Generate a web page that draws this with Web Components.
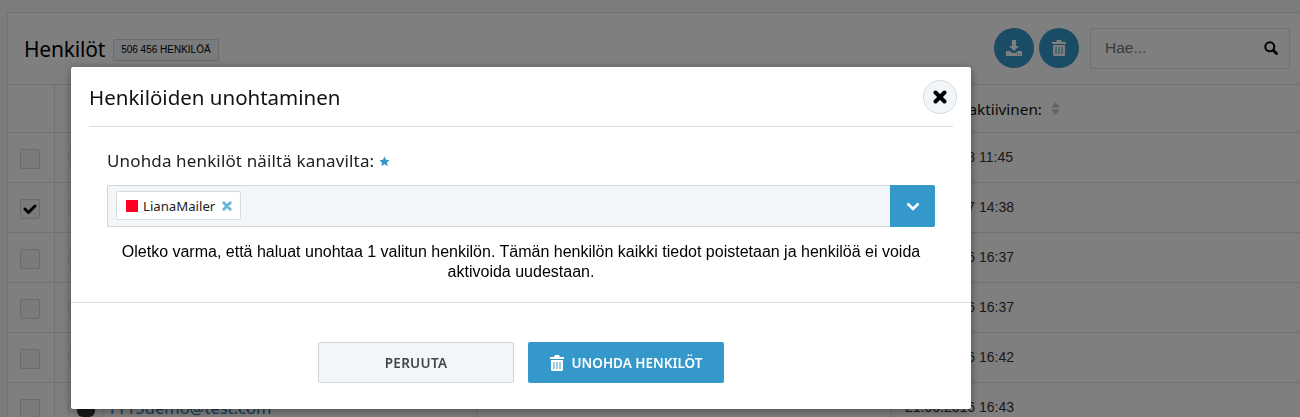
<!DOCTYPE html>
<html lang="fi">
<head>
<meta charset="utf-8">
<title>Henkilöt</title>
<style>
  html, body { margin: 0; height: 417px; overflow: hidden; }
  body { background: #f7f8fa; font-family: "Liberation Sans", Arial, sans-serif; color: #000; }
</style>
</head>
<body>
<people-page></people-page>
<forget-dialog></forget-dialog>

<script>
const SANS = `"Noto Sans", "Open Sans", sans-serif`;

const ICONS = {
	trash: '<svg viewBox="0 0 14 16" width="14" height="16"><path fill="currentColor" fill-rule="evenodd" d="M5 0h4l1 2h4v2H0V2h4zM1 5h12v9.500a1.500 1.500 0 0 1-1.500 1.500h-9A1.500 1.500 0 0 1 1 14.500zM3.500 7v7h1V7zm3 0v7h1V7zm3 0v7h1V7z"/></svg>',
	download: '<svg viewBox="0 0 16 16" width="16" height="16"><path fill="currentColor" fill-rule="evenodd" d="M6 0h4v6h3L8 11 3 6h3zM0 11h4l2 2h4l2-2h4v5H0zm11 2.800v1h1v-1zm2.200 0v1h1v-1z"/></svg>',
	search: '<svg viewBox="0 0 14 14" width="14" height="14"><path fill="none" stroke="currentColor" stroke-width="2" d="M5.800 1.300a4.500 4.500 0 1 0 0 9 4.500 4.500 0 0 0 0-9z"/><path stroke="currentColor" stroke-width="2.800" stroke-linecap="round" d="M9.500 9.500l3 3"/></svg>',
	close: '<svg viewBox="0 0 14 14" width="14" height="14"><path stroke="currentColor" stroke-width="4" stroke-linecap="round" d="M2.500 2.500l9 9M11.500 2.500l-9 9"/></svg>',
	check: '<svg viewBox="0 0 14 12" width="14" height="12"><path fill="none" stroke="currentColor" stroke-width="3" stroke-linecap="round" stroke-linejoin="round" d="M2 6l3.500 3.500L12 3"/></svg>',
	chevron: '<svg viewBox="0 0 14 9" width="14" height="9"><path fill="none" stroke="currentColor" stroke-width="2.600" d="M1.500 1.500L7 7l5.500-5.500"/></svg>',
	star: '<svg viewBox="0 0 12 12" width="11" height="11"><path fill="currentColor" d="M6 .5l1.700 3.500 3.800.5-2.800 2.700.7 3.800L6 9l-3.400 1.800.7-3.800L.5 4.500 4.300 4z"/></svg>',
	sort: '<svg viewBox="0 0 9 13" width="9" height="13"><path fill="currentColor" d="M4.500 0L9 5.500H0zM4.500 13L0 7.500h9z"/></svg>',
	user: '<svg viewBox="0 0 34 34" width="34" height="34"><rect x="8" y="8" width="18" height="18" rx="6" fill="currentColor"/><path fill="currentColor" d="M4 34c0-4 5-6 13-6s13 2 13 6z"/></svg>'
};

// Page behind the dialog
class PeoplePage extends HTMLElement {
	constructor() {
		super();
		this.attachShadow({ mode: 'open' });
		const rows = [
			{ date: '12.10.2018 11:45' },
			{ date: '09.03.2017 14:38', checked: true },
			{ date: '21.06.2016 16:37' },
			{ date: '21.06.2016 16:37' },
			{ date: '21.06.2016 16:42' },
			{ date: '21.06.2016 16:43', mail: '1115demo@test.com' },
		];
		const rowHtml = rows.map(r => `
			<div class="row">
				<div class="c-check"><span class="box">${r.checked ? ICONS.check : ''}</span></div>
				<div class="c-main"><span class="avatar">${ICONS.user}</span><a>${r.mail || ''}</a></div>
				<div class="c-mid"></div>
				<div class="c-date">${r.date}</div>
			</div>`).join('');
		this.shadowRoot.innerHTML = `
			<style>
				:host { display: block; padding: 12px 0 0 7px; width: 1320px; box-sizing: border-box; }
				.panel { border: 1px solid #dfe3e8; border-right: 0; background: #fff; }
				.head { display: flex; align-items: center; height: 71px; padding-left: 16px; border-bottom: 1px solid #dfe3e8; box-sizing: content-box; }
				h1 { margin: 0; font: 400 21px ${SANS}; letter-spacing: -.2px; }
				.count { margin-left: 8px; margin-top: 3px; padding: 0 7px; height: 20px; line-height: 20px; border: 1px solid #cfd6dd; border-radius: 2px; background: #f3f6f9; font-size: 10px; white-space: nowrap; }
				.tools { margin-left: auto; margin-right: 30px; display: flex; align-items: center; gap: 5px; margin-top: -1px; }
				.round { width: 40px; height: 40px; border-radius: 50%; background: #3498cb; color: #fff; display: flex; align-items: center; justify-content: center; }
				.search { margin-left: 6px; width: 200px; height: 41px; border: 1px solid #dfe3e8; border-radius: 2px; background: #fff; display: flex; align-items: center; justify-content: space-between; padding: 0 11px 0 14px; box-sizing: border-box; font-size: 15.500px; color: #777; }
				.search svg { color: #000; display: block; }
				.thead { display: grid; grid-template-columns: 47px 422px 415px 1fr; height: 47px; border-bottom: 1px solid #dfe3e8; }
				.thead > div:first-child { border-right: 1px solid #dfe3e8; }
				.thead .last { padding-left: 13px; display: flex; align-items: center; gap: 9px; font: 400 15.300px ${SANS}; white-space: nowrap; color: #111; }
				.thead .last svg { color: #c4c6c8; }
				.row { display: grid; grid-template-columns: 47px 422px 415px 1fr; height: 49px; border-bottom: 1px solid #dfe3e8; }
				.row > div { display: flex; align-items: center; overflow: hidden; }
				.c-check { justify-content: center; border-right: 1px solid #dfe3e8; padding-right: 3px; }
				.box { width: 18px; height: 18px; margin-top: 3px; border: 1px solid #cfd6dd; border-radius: 2px; background: #f3f6f9; display: flex; align-items: center; justify-content: center; }
				.c-main { padding-left: 13px; gap: 3px; border-right: 1px solid #dfe3e8; }
				.avatar { flex: none; width: 36px; height: 36px; border: 1px solid #dfe3e8; border-radius: 50%; box-sizing: border-box; display: flex; align-items: center; justify-content: center; overflow: hidden; color: #333; }
				a { color: #2c78a8; font: 400 16.500px ${SANS}; }
				.c-mid { border-right: 1px solid #dfe3e8; }
				.c-date { padding: 0 0 2px 13px; font-size: 14px; color: #333; white-space: nowrap; }
			</style>
			<div class="panel">
				<div class="head">
					<h1>Henkilöt</h1>
					<span class="count">506 456 HENKILÖÄ</span>
					<div class="tools">
						<span class="round">${ICONS.download}</span>
						<span class="round">${ICONS.trash}</span>
						<div class="search"><span>Hae...</span>${ICONS.search}</div>
					</div>
				</div>
				<div class="thead"><div></div><div></div><div></div><div class="last">Viimeksi aktiivinen: ${ICONS.sort}</div></div>
				${rowHtml}
			</div>`;
	}
}

// Small selected channel tag inside the select
class ChannelTag extends HTMLElement {
	constructor() {
		super();
		this.attachShadow({ mode: 'open' });
		this.shadowRoot.innerHTML = `
			<style>
				:host { display: inline-flex; align-items: center; height: 29px; padding: 0 8px 0 9px; background: #fff; border: 1px solid #d5dbe1; border-radius: 2px; font-size: 13.200px; color: #222; box-sizing: border-box; }
				.dot { width: 12px; height: 12px; background: #ff0022; margin-right: 5px; }
				.x { margin-left: 7px; color: #64b5dc; display: flex; }
				.x svg { width: 10px; height: 10px; }
			</style>
			<span class="dot"></span><slot></slot><span class="x">${ICONS.close}</span>`;
	}
}

// Forget people modal
class ForgetDialog extends HTMLElement {
	constructor() {
		super();
		this.attachShadow({ mode: 'open' });
		this.shadowRoot.innerHTML = `
			<style>
				:host { position: fixed; inset: 0; display: block; background: rgba(0, 0, 0, .5); }
				.modal { position: absolute; left: 71px; top: 67px; width: 900px; height: 342px; background: #fff; box-shadow: 0 2px 10px rgba(0, 0, 0, .4); border-radius: 2px; display: flex; flex-direction: column; font-family: ${SANS}; }
				header { margin: 0 18px; height: 59px; border-bottom: 1px solid #dcdfe2; display: flex; align-items: center; justify-content: space-between; }
				h2 { margin: 1px 0 0; font: 400 20.500px ${SANS}; color: #111; }
				.close { width: 34px; height: 34px; border-radius: 50%; background: #f3f6f9; border: 1px solid #d5d9de; box-sizing: border-box; display: flex; align-items: center; justify-content: center; color: #000; margin-right: -4px; }
				.body { padding: 22px 36px 0; height: 176px; box-sizing: border-box; border-bottom: 1px solid #dcdfe2; }
				label { display: flex; align-items: center; gap: 5px; font-size: 17px; color: #222; height: 22px; letter-spacing: .14px; }
				label svg { color: #3498cb; margin-top: 2px; }
				.select { margin-top: 14px; height: 42px; display: flex; background: #f3f6f9; border: 1px solid #d0d6dc; border-right: 0; border-radius: 2px; box-sizing: border-box; }
				.tags { flex: 1; padding: 5px 8px; }
				.arrow { width: 45px; margin: -1px 0; background: #3498cb; color: #fff; display: flex; align-items: center; justify-content: center; border-radius: 0 2px 2px 0; }
				p { margin: 15px 0 0; text-align: center; font: 16px/20px "Liberation Sans", Arial, sans-serif; color: #000; }
				footer { flex: 1; display: flex; justify-content: center; gap: 14px; padding-top: 39px; }
				button { width: 196px; height: 41px; box-sizing: border-box; border-radius: 2px; font: 600 13.500px ${SANS}; letter-spacing: .3px; display: flex; align-items: center; justify-content: center; gap: 8px; padding: 0; }
				.cancel { background: #f3f6f9; border: 1px solid #cfd5db; color: #444; }
				.ok { background: #3498cb; border: 0; color: #fff; letter-spacing: 0; }
			</style>
			<div class="modal">
				<header><h2>Henkilöiden unohtaminen</h2><span class="close">${ICONS.close}</span></header>
				<div class="body">
					<label>Unohda henkilöt näiltä kanavilta: ${ICONS.star}</label>
					<div class="select">
						<div class="tags"><channel-tag>LianaMailer</channel-tag></div>
						<span class="arrow">${ICONS.chevron}</span>
					</div>
					<p>Oletko varma, että haluat unohtaa 1 valitun henkilön. Tämän henkilön kaikki tiedot poistetaan ja henkilöä ei voida aktivoida uudestaan.</p>
				</div>
				<footer>
					<button class="cancel">PERUUTA</button>
					<button class="ok">${ICONS.trash}UNOHDA HENKILÖT</button>
				</footer>
			</div>`;
	}
}

customElements.define('people-page', PeoplePage);
customElements.define('channel-tag', ChannelTag);
customElements.define('forget-dialog', ForgetDialog);
</script>
</body>
</html>
